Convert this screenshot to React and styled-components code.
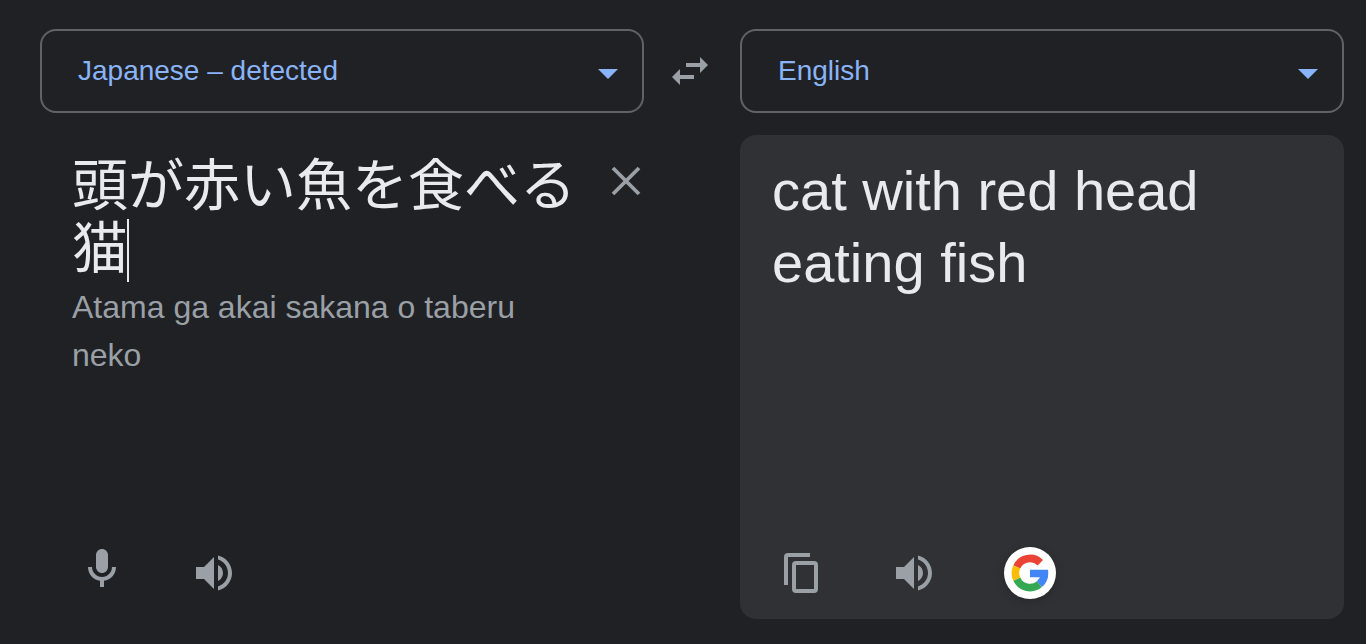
import styled, { createGlobalStyle } from 'styled-components';

const Colors = {
    page: '#202124',
    panel: '#303134',
    outline: '#5f6368',
    link: '#8ab4f8',
    text: '#e8eaed',
    muted: '#9aa0a6',
};

const GlobalStyle = createGlobalStyle`
    * {
        box-sizing: border-box;
    }
    body {
        margin: 0;
        background-color: ${Colors.page};
        color: ${Colors.text};
        font-family: 'Liberation Sans', 'Noto Sans CJK JP', sans-serif;
    }
`;

const Page = styled.main`
    display: flex;
    flex-direction: column;
    gap: 22px;
    height: 644px;
    padding: 29px 22px 25px 40px;
    overflow: hidden;
`;

const LanguageBar = styled.div`
    display: grid;
    grid-template-columns: 604px 96px 604px;
    height: 84px;
`;

const LanguageSelect = styled.button`
    display: flex;
    align-items: center;
    justify-content: space-between;
    padding: 0 24px 0 36px;
    border: 2px solid ${Colors.outline};
    border-radius: 16px;
    background: none;
    color: ${Colors.link};
    font-family: inherit;
    font-size: 28px;
`;

const Arrow = styled.span`
    margin-top: 5px;
    border: 10px solid transparent;
    border-top-color: ${Colors.link};
    border-bottom: 0;
`;

const SwapButton = styled.button`
    display: flex;
    align-items: center;
    justify-content: center;
    padding: 0 4px 0 0;
    border: 0;
    background: none;
    color: ${Colors.muted};
`;

const Panels = styled.div`
    display: grid;
    grid-template-columns: 604px 604px;
    column-gap: 96px;
    flex: 1;
`;

const Panel = styled.section`
    display: flex;
    flex-direction: column;
    justify-content: space-between;
    padding: ${(props) => (props.$filled ? '20px 32px' : '14px 0 20px 32px')};
    border-radius: 16px;
    background-color: ${(props) =>
        props.$filled ? Colors.panel : 'transparent'};
`;

const SourceRow = styled.div`
    display: flex;
    justify-content: space-between;
    height: 134px;
`;

const SourceText = styled.p`
    width: 504px;
    margin: 0;
    font-family: 'Noto Sans CJK JP', sans-serif;
    font-size: 56px;
    font-weight: 400;
    line-height: 63px;
`;

const Caret = styled.span`
    display: inline-block;
    width: 2px;
    height: 63px;
    margin: 0 0 -10px -1px;
    vertical-align: -4px;
    background-color: ${Colors.text};
`;

const ClearButton = styled.button`
    display: flex;
    height: 64px;
    padding: 0 3px 0 0;
    border: 0;
    background: none;
    color: ${Colors.muted};
`;

const Romaji = styled.p`
    width: 500px;
    margin: 0;
    color: ${Colors.muted};
    font-size: 32px;
    line-height: 48px;
`;

const Translation = styled.p`
    width: 500px;
    margin: 0;
    font-size: 56px;
    line-height: 72px;
`;

const Actions = styled.div`
    display: flex;
    align-items: center;
    height: 52px;
`;

const ActionButton = styled.button`
    display: flex;
    align-items: center;
    justify-content: center;
    width: 60px;
    height: 52px;
    margin-right: 52px;
    padding: 0 ${(props) => props.$shift || 0}px
        ${(props) => props.$lift || 0}px 0;
    border: 0;
    background: none;
    color: ${Colors.muted};
`;

const SearchButton = styled.button`
    display: flex;
    align-items: center;
    justify-content: center;
    width: 52px;
    height: 52px;
    margin-left: 8px;
    padding: 0;
    border: 0;
    border-radius: 50%;
    background-color: #fff;
    box-shadow: 0 2px 10px rgba(0, 0, 0, 0.2);
`;

const SpeakerIcon = () => (
    <svg width='48' height='48' viewBox='0 0 24 24' fill='currentColor'>
        <path d='M3 9v6h4l5 5V4L7 9H3zm13.5 3A4.5 4.5 0 0 0 14 7.97v8.05c1.48-.73 2.5-2.25 2.5-4.02zM14 3.23v2.06c2.89.86 5 3.54 5 6.71s-2.11 5.85-5 6.71v2.06c4.01-.91 7-4.49 7-8.77s-2.99-7.86-7-8.77z' />
    </svg>
);

const MicIcon = () => (
    <svg width='48' height='48' viewBox='0 0 24 24' fill='currentColor'>
        <path d='M12 14c1.66 0 3-1.34 3-3V5c0-1.66-1.34-3-3-3S9 3.34 9 5v6c0 1.66 1.34 3 3 3z' />
        <path d='M17 11c0 2.76-2.24 5-5 5s-5-2.24-5-5H5c0 3.53 2.61 6.43 6 6.92V21h2v-3.08c3.39-.49 6-3.39 6-6.92h-2z' />
    </svg>
);

const CopyIcon = () => (
    <svg width='34' height='40' viewBox='0 0 34 40' fill='currentColor'>
        <path d='M4 0H26V4H4V32H0V4Q0 0 4 0z' />
        <path
            fillRule='evenodd'
            d='M12 8H30Q34 8 34 12V36Q34 40 30 40H12Q8 40 8 36V12Q8 8 12 8zM12 12V36H30V12z'
        />
    </svg>
);

const SwapIcon = () => (
    <svg width='48' height='48' viewBox='0 0 24 24' fill='currentColor'>
        <path d='M6.99 11L3 15l3.99 4v-3H14v-2H6.99v-3zM21 9l-3.99-4v3H10v2h7.01v3L21 9z' />
    </svg>
);

const CloseIcon = () => (
    <svg width='30' height='64' viewBox='0 0 30 64' fill='none'>
        <path
            d='M2 19l26 26M28 19L2 45'
            stroke='currentColor'
            strokeWidth='3.8'
        />
    </svg>
);

const GoogleIcon = () => (
    <svg width='38' height='38' viewBox='0 0 38 38' fill='none'>
        <g strokeWidth='7.6'>
            <path stroke='#EA4335' d='M5.77 12.83A14.6 14.6 0 0 1 29.3 8.7' />
            <path stroke='#34A853' d='M5.77 25.17A14.6 14.6 0 0 0 28.4 30.2' />
            <path stroke='#FBBC05' d='M5.77 12.83A14.6 14.6 0 0 0 5.77 25.17' />
            <path stroke='#4285F4' d='M28.4 30.2A14.6 14.6 0 0 0 33.4 21.5' />
        </g>
        <path fill='#4285F4' d='M19 15.8H37.1Q37.6 19.5 36.9 23.2H19z' />
    </svg>
);

const LanguagePicker = ({ label }) => (
    <LanguageSelect>
        {label}
        <Arrow />
    </LanguageSelect>
);

const App = () => (
    <>
        <GlobalStyle />
        <Page>
            <LanguageBar>
                <LanguagePicker label='Japanese – detected' />
                <SwapButton aria-label='Swap languages'>
                    <SwapIcon />
                </SwapButton>
                <LanguagePicker label='English' />
            </LanguageBar>
            <Panels>
                <Panel>
                    <div>
                        <SourceRow>
                            <SourceText lang='ja'>
                                頭が赤い魚を食べる猫
                                <Caret />
                            </SourceText>
                            <ClearButton aria-label='Clear'>
                                <CloseIcon />
                            </ClearButton>
                        </SourceRow>
                        <Romaji>Atama ga akai sakana o taberu neko</Romaji>
                    </div>
                    <Actions>
                        <ActionButton aria-label='Speak' $lift={8}>
                            <MicIcon />
                        </ActionButton>
                        <ActionButton aria-label='Listen'>
                            <SpeakerIcon />
                        </ActionButton>
                    </Actions>
                </Panel>
                <Panel $filled>
                    <Translation>cat with red head eating fish</Translation>
                    <Actions>
                        <ActionButton aria-label='Copy' $shift={2}>
                            <CopyIcon />
                        </ActionButton>
                        <ActionButton aria-label='Listen'>
                            <SpeakerIcon />
                        </ActionButton>
                        <SearchButton aria-label='Search'>
                            <GoogleIcon />
                        </SearchButton>
                    </Actions>
                </Panel>
            </Panels>
        </Page>
    </>
);

export default App;
